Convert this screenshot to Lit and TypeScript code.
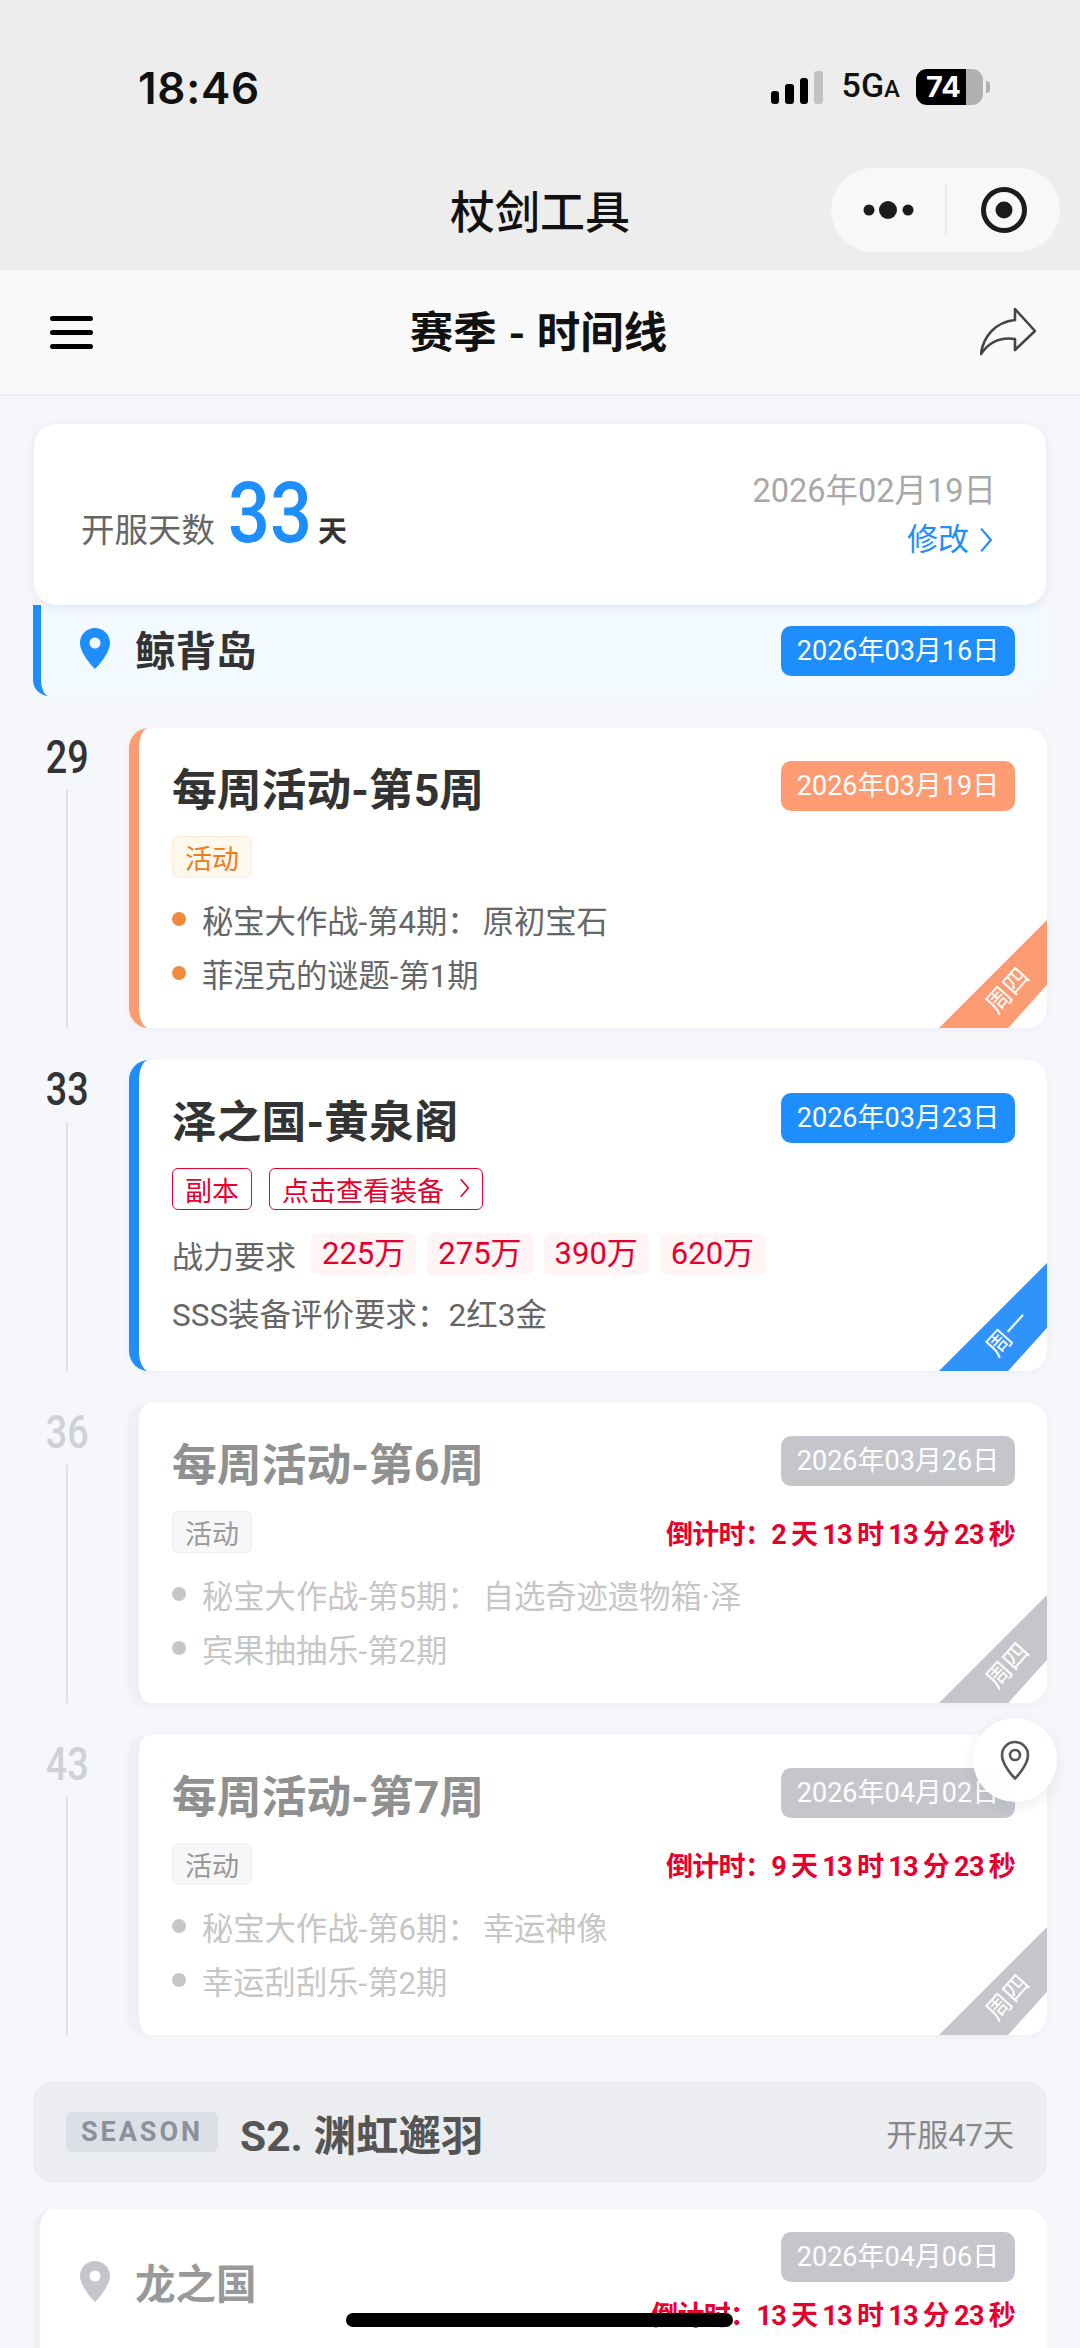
import { LitElement, css, html, nothing } from "lit";
import { customElement } from "lit/decorators.js";

type Tone = "orange" | "blue" | "grey";

interface TimelineItem {
  day: number;
  tone: Tone;
  title: string;
  date: string;
  weekday: string;
  countdown?: string;
  bullets?: string[];
  dungeon?: boolean;
}

const ITEMS: TimelineItem[] = [
  {
    day: 29,
    tone: "orange",
    title: "每周活动-第5周",
    date: "2026年03月19日",
    weekday: "周四",
    bullets: ["秘宝大作战-第4期：原初宝石", "菲涅克的谜题-第1期"],
  },
  {
    day: 33,
    tone: "blue",
    title: "泽之国-黄泉阁",
    date: "2026年03月23日",
    weekday: "周一",
    dungeon: true,
  },
  {
    day: 36,
    tone: "grey",
    title: "每周活动-第6周",
    date: "2026年03月26日",
    weekday: "周四",
    countdown: "倒计时：2 天 13 时 13 分 23 秒",
    bullets: ["秘宝大作战-第5期：自选奇迹遗物箱·泽", "宾果抽抽乐-第2期"],
  },
  {
    day: 43,
    tone: "grey",
    title: "每周活动-第7周",
    date: "2026年04月02日",
    weekday: "周四",
    countdown: "倒计时：9 天 13 时 13 分 23 秒",
    bullets: ["秘宝大作战-第6期：幸运神像", "幸运刮刮乐-第2期"],
  },
];

const POWER = ["225万", "275万", "390万", "620万"];

const pin = html`<svg class="pin" viewBox="0 0 30 41">
  <path
    fill-rule="evenodd"
    d="M15 0C6.7 0 0 6.7 0 15c0 11 15 26 15 26s15-15 15-26C30 6.7 23.3 0 15 0Zm0 9.5a5.5 5.5 0 1 1 0 11 5.5 5.5 0 0 1 0-11Z"
  />
</svg>`;

const chevron = html`<svg class="chevron" viewBox="0 0 12 24">
  <path d="M1.5 1.5 10.5 12 1.5 22.5" />
</svg>`;

@customElement("app-root")
export class AppRoot extends LitElement {
  static styles = css`
    :host {
      display: block;
      position: relative;
      height: 2348px;
      overflow: hidden;
      background: #f6f7fb;
      color: #333;
      font-family: "Roboto", "Noto Sans CJK SC", sans-serif;
    }

    /* system chrome */
    .chrome {
      height: 270px;
      background: #ededed;
      display: flex;
      flex-direction: column;
    }
    .status {
      height: 168px;
      display: flex;
      justify-content: space-between;
      padding: 0 97px 0 138px;
      box-sizing: border-box;
    }
    .clock {
      margin-top: 60px;
      font: 600 44px/56px "Inter", sans-serif;
      color: #111;
      letter-spacing: 0.7px;
    }
    .status-right {
      margin-top: 69px;
      height: 36px;
      display: flex;
      align-items: center;
      gap: 19px;
    }
    .signal {
      display: flex;
      align-items: flex-end;
      gap: 6px;
      height: 33px;
    }
    .signal i {
      width: 8.5px;
      border-radius: 3px;
      background: #000;
    }
    .signal i.off {
      background: #c2c2c2;
    }
    .net {
      font: 500 34px/36px "Roboto", sans-serif;
      color: #111;
      margin-right: -3px;
    }
    .net small {
      font-size: 24px;
    }
    .battery {
      position: relative;
      width: 67px;
      height: 36px;
      border-radius: 11px;
      background: linear-gradient(90deg, #000 50px, #b0b0b0 50px);
      color: #fff;
      font: 700 29px/36px "Inter", sans-serif;
      padding-left: 10px;
      box-sizing: border-box;
    }
    .battery::after {
      content: "";
      position: absolute;
      left: 70px;
      top: 12px;
      width: 4px;
      height: 12px;
      border-radius: 0 6px 6px 0;
      background: #b0b0b0;
    }
    .mini-title {
      position: relative;
      flex: 1;
      display: flex;
      align-items: flex-start;
      justify-content: center;
      font: 500 45px/84px "Noto Sans CJK SC", sans-serif;
      color: #111;
    }
    .capsule {
      position: absolute;
      right: 20px;
      top: 0;
      width: 229px;
      height: 84px;
      display: block;
    }

    /* page header */
    .nav {
      height: 126px;
      background: #f9f9f9;
      border-bottom: 2px solid #ececef;
      box-sizing: border-box;
      display: flex;
      align-items: center;
      justify-content: space-between;
      padding: 0 44px 0 50px;
    }
    .menu {
      width: 43px;
      display: grid;
      gap: 9px;
    }
    .menu i {
      height: 5px;
      border-radius: 3px;
      background: #000;
    }
    .nav-title {
      font: 700 43.5px/56px "Noto Sans CJK SC", sans-serif;
      word-spacing: 2px;
      color: #111;
      margin: -2px 0 2px 4px;
    }
    .share {
      width: 56px;
      height: 48px;
      display: block;
      fill: none;
      stroke: #444;
      stroke-width: 2.6;
      stroke-linejoin: round;
    }

    .content {
      padding: 28px 33px 0;
    }

    .summary {
      position: relative;
      z-index: 1;
      margin: 0 1px;
      height: 181px;
      box-sizing: border-box;
      padding: 0 50px 0 47px;
      border-radius: 22px;
      background: #fff;
      box-shadow: 0 2px 10px rgba(60, 70, 90, 0.1);
      display: flex;
      align-items: center;
      justify-content: space-between;
    }
    .opened {
      display: flex;
      align-items: baseline;
      margin-top: -4px;
    }
    .opened-label {
      font-size: 33.5px;
      color: #666;
    }
    .opened-num {
      font-size: 86px;
      line-height: 90px;
      font-weight: 500;
      color: #1e8efc;
      width: 82px;
      margin: 0 8px 0 13px;
      transform: scaleX(0.86);
      transform-origin: left;
    }
    .opened-unit {
      font-size: 29px;
      font-weight: 700;
      color: #333;
    }
    .start {
      display: grid;
      justify-items: end;
      gap: 4px;
    }
    .start-date {
      font-size: 32.5px;
      line-height: 46px;
      color: #a8a8a8;
    }
    .edit {
      display: flex;
      align-items: center;
      gap: 10px;
      font-size: 31px;
      line-height: 44px;
      color: #1e8efc;
      margin-right: 3px;
    }
    .edit .chevron {
      width: 14px;
      height: 26px;
    }
    .chevron {
      fill: none;
      stroke: currentColor;
      stroke-width: 2;
      display: block;
    }

    .island {
      height: 91px;
      box-sizing: border-box;
      display: flex;
      align-items: center;
      justify-content: space-between;
      padding: 0 32px 0 39px;
      margin-bottom: 32px;
      background: #f2f9ff;
      border-left: 8px solid #1e8efc;
      border-radius: 0 0 20px 16px;
    }
    .place {
      display: flex;
      align-items: center;
      gap: 25px;
      font-size: 40.5px;
      font-weight: 700;
    }
    .place span {
      margin-top: -4px;
    }
    .pin {
      width: 30px;
      height: 41px;
      fill: #1e8efc;
      display: block;
      margin-top: -4px;
    }

    .date {
      font-size: 27px;
      line-height: 50px;
      height: 50px;
      width: 234px;
      text-align: center;
      border-radius: 10px;
      color: #fff;
      white-space: nowrap;
      flex: none;
    }
    .date.blue {
      background: #1e8efc;
    }
    .date.orange {
      background: #fd9b72;
    }
    .date.grey {
      background: #c4c6cb;
    }

    .row {
      display: grid;
      grid-template-columns: 68px 1fr;
      column-gap: 28px;
      padding-bottom: 32px;
    }
    .rail {
      display: flex;
      flex-direction: column;
      align-items: center;
    }
    .day {
      height: 62px;
      font-size: 46px;
      line-height: 58px;
      font-weight: 500;
      color: #333;
      transform: scaleX(0.82);
    }
    .rail.grey .day {
      color: #cfd1d5;
    }
    .rail i {
      flex: 1;
      width: 2px;
      background: #dfe2ea;
    }

    .card {
      position: relative;
      overflow: hidden;
      box-sizing: border-box;
      min-height: 300px;
      padding: 33px 32px 26px 33px;
      border-radius: 20px;
      background: #fff;
      border-left: 10px solid;
      box-shadow: 0 2px 10px rgba(60, 70, 90, 0.05);
    }
    .card.orange {
      border-color: #fd9b72;
    }
    .card.blue {
      border-color: #1e8efc;
    }
    .card.grey {
      border-color: #eef0f3;
    }
    .head {
      display: flex;
      justify-content: space-between;
      align-items: flex-start;
    }
    .title {
      font-size: 44.8px;
      line-height: 60px;
      font-weight: 700;
      color: #333;
    }
    .card.grey .title {
      color: #909090;
    }
    .meta {
      margin-top: 15px;
      display: flex;
      justify-content: space-between;
      align-items: center;
    }
    .tags {
      display: flex;
      gap: 17px;
    }
    .tag {
      box-sizing: border-box;
      height: 42px;
      padding: 0 12px;
      display: flex;
      align-items: center;
      gap: 15px;
      font-size: 27px;
      border-radius: 6px;
      border: 1.5px solid;
    }
    .tag.event {
      color: #ea7d22;
      background: #fff8ec;
      border-color: #fbeed8;
    }
    .card.grey .tag.event {
      color: #999;
      background: #f6f7f9;
      border-color: #eceef1;
    }
    .tag.raid {
      color: #e6002d;
      border-color: #e6002d;
      background: #fff;
    }
    .tag .chevron {
      width: 11px;
      height: 20px;
      margin-top: -3px;
    }
    .countdown {
      font-size: 27px;
      font-weight: 700;
      letter-spacing: -0.7px;
      word-spacing: -1px;
      color: #e6002d;
    }
    .bullets {
      margin-top: 14px;
      display: grid;
      grid-auto-rows: 54px;
    }
    .bullet {
      display: flex;
      align-items: center;
      font-size: 31.3px;
      color: #666;
    }
    .bullet::before {
      content: "";
      width: 14px;
      height: 14px;
      margin-right: 16px;
      border-radius: 50%;
      background: #f08a3c;
    }
    .bullet .colon {
      margin-right: 4px;
    }
    .card.grey .bullet {
      color: #c6c6c6;
    }
    .card.grey .bullet::before {
      background: #c6c6c6;
    }
    .power {
      margin-top: 22px;
      height: 44px;
      display: flex;
      align-items: center;
      font-size: 31px;
      color: #666;
    }
    .power b {
      margin-left: 11px;
      height: 42px;
      line-height: 42px;
      padding: 0 11px;
      border-radius: 6px;
      font-weight: 400;
      color: #e6002d;
      background: #fff5f5;
    }
    .power b:first-of-type {
      margin-left: 15px;
    }
    .sss {
      margin: 18px 0 7px;
      font-size: 31.5px;
      line-height: 44px;
      color: #666;
    }

    .corner {
      position: absolute;
      right: 0;
      bottom: 0;
      width: 108px;
      height: 108px;
      clip-path: polygon(100% 0, 100% 60%, 64% 100%, 0 100%);
    }
    .corner.orange {
      background: #fd9b72;
    }
    .corner.blue {
      background: #2f93fb;
    }
    .corner.grey {
      background: #c4c6cb;
    }
    .corner span {
      position: absolute;
      left: 69px;
      top: 71px;
      transform: translate(-50%, -50%) rotate(-48deg);
      font-size: 25px;
      line-height: 30px;
      color: #fff;
      white-space: nowrap;
    }

    .season {
      margin-top: 14px;
      height: 102px;
      box-sizing: border-box;
      padding: 0 33px;
      border-radius: 20px;
      background: #ebedf1;
      display: flex;
      align-items: center;
    }
    .season-chip {
      height: 40px;
      line-height: 40px;
      width: 152px;
      text-align: center;
      border-radius: 6px;
      background: #dcdfe6;
      color: #8a909c;
      font-size: 27px;
      font-weight: 700;
      letter-spacing: 3px;
    }
    .season-name {
      margin-left: 22px;
      font-size: 42.5px;
      font-weight: 700;
      color: #555;
    }
    .season-day {
      margin-left: auto;
      font-size: 31px;
      color: #888;
    }

    .next {
      margin-top: 26px;
      height: 180px;
      box-sizing: border-box;
      padding: 23px 32px 0 40px;
      border-left: 7px solid #eef0f3;
      border-radius: 20px;
      background: #fff;
      display: flex;
      justify-content: space-between;
    }
    .next .place {
      color: #999;
      align-self: flex-start;
      margin-top: 24px;
    }
    .next .pin {
      fill: #c4c6cb;
    }
    .next-side {
      display: grid;
      justify-items: end;
      align-content: start;
      gap: 12px;
    }

    .locate {
      position: absolute;
      left: 973px;
      top: 1718px;
      width: 84px;
      height: 84px;
      border-radius: 50%;
      background: rgba(255, 255, 255, 0.96);
      box-shadow: 0 4px 14px rgba(60, 70, 90, 0.1);
      display: flex;
      align-items: center;
      justify-content: center;
    }
    .locate svg {
      width: 30px;
      height: 40px;
      fill: none;
      stroke: #555;
      stroke-width: 2.6;
    }
    .home {
      position: absolute;
      left: 346px;
      top: 2313px;
      width: 387px;
      height: 14px;
      border-radius: 7px;
      background: #000;
    }
  `;

  private renderBullet(text: string) {
    const [name, rest] = text.split("：");
    return html`<div class="bullet">
      <span
        >${name}${rest !== undefined
          ? html`<span class="colon">：</span>${rest}`
          : nothing}</span
      >
    </div>`;
  }

  private renderCard(item: TimelineItem) {
    return html`<div class="row">
      <div class="rail ${item.tone}">
        <div class="day">${item.day}</div>
        <i></i>
      </div>
      <div class="card ${item.tone}">
        <div class="head">
          <div class="title">${item.title}</div>
          <div class="date ${item.tone}">${item.date}</div>
        </div>
        ${item.dungeon ? this.renderDungeon() : this.renderEvent(item)}
        <div class="corner ${item.tone}"><span>${item.weekday}</span></div>
      </div>
    </div>`;
  }

  private renderEvent(item: TimelineItem) {
    return html`<div class="meta">
        <div class="tags"><div class="tag event">活动</div></div>
        ${item.countdown
          ? html`<div class="countdown">${item.countdown}</div>`
          : nothing}
      </div>
      <div class="bullets">
        ${item.bullets?.map((b) => this.renderBullet(b))}
      </div>`;
  }

  private renderDungeon() {
    return html`<div class="meta">
        <div class="tags">
          <div class="tag raid">副本</div>
          <div class="tag raid">点击查看装备 ${chevron}</div>
        </div>
      </div>
      <div class="power">
        战力要求 ${POWER.map((p) => html`<b>${p}</b>`)}
      </div>
      <div class="sss">SSS装备评价要求：2红3金</div>`;
  }

  protected render() {
    return html`
      <div class="chrome">
        <div class="status">
          <div class="clock">18:46</div>
          <div class="status-right">
            <div class="signal">
              <i style="height:13px"></i>
              <i style="height:20px"></i>
              <i style="height:26px"></i>
              <i class="off" style="height:33px"></i>
            </div>
            <div class="net">5G<small>A</small></div>
            <div class="battery">74</div>
          </div>
        </div>
        <div class="mini-title">
          杖剑工具
          <svg class="capsule" viewBox="0 0 229 84">
            <rect width="229" height="84" rx="42" fill="#f8f8f8" />
            <circle cx="38" cy="42" r="5.5" fill="#1c1c1c" />
            <circle cx="57" cy="42" r="9" fill="#1c1c1c" />
            <circle cx="77" cy="42" r="5.5" fill="#1c1c1c" />
            <path d="M115 16v52" stroke="#e9e9e9" stroke-width="1.5" />
            <circle cx="173" cy="42" r="20.5" fill="none" stroke="#1c1c1c" stroke-width="5" />
            <circle cx="173" cy="42" r="8.5" fill="#1c1c1c" />
          </svg>
        </div>
      </div>
      <div class="nav">
        <div class="menu"><i></i><i></i><i></i></div>
        <div class="nav-title">赛季 - 时间线</div>
        <svg class="share" viewBox="0 0 56 48">
          <path d="M35 1 55 23 35 42V31C21 29 9 34 1 46 3 29 15 14 35 12Z" />
        </svg>
      </div>
      <div class="content">
        <div class="summary">
          <div class="opened">
            <span class="opened-label">开服天数</span>
            <span class="opened-num">33</span>
            <span class="opened-unit">天</span>
          </div>
          <div class="start">
            <div class="start-date">2026年02月19日</div>
            <div class="edit">修改 ${chevron}</div>
          </div>
        </div>
        <div class="island">
          <div class="place">${pin}<span>鲸背岛</span></div>
          <div class="date blue">2026年03月16日</div>
        </div>
        ${ITEMS.map((item) => this.renderCard(item))}
        <div class="season">
          <div class="season-chip">SEASON</div>
          <div class="season-name">S2. 渊虹邂羽</div>
          <div class="season-day">开服47天</div>
        </div>
        <div class="next">
          <div class="place">${pin}<span>龙之国</span></div>
          <div class="next-side">
            <div class="date grey">2026年04月06日</div>
            <div class="countdown">倒计时：13 天 13 时 13 分 23 秒</div>
          </div>
        </div>
      </div>
      <div class="locate">
        <svg viewBox="0 0 30 40">
          <path d="M15 38.5S2 25.5 2 15a13 13 0 0 1 26 0c0 10.5-13 23.5-13 23.5Z" />
          <circle cx="15" cy="15" r="5" />
        </svg>
      </div>
      <div class="home"></div>
    `;
  }
}
